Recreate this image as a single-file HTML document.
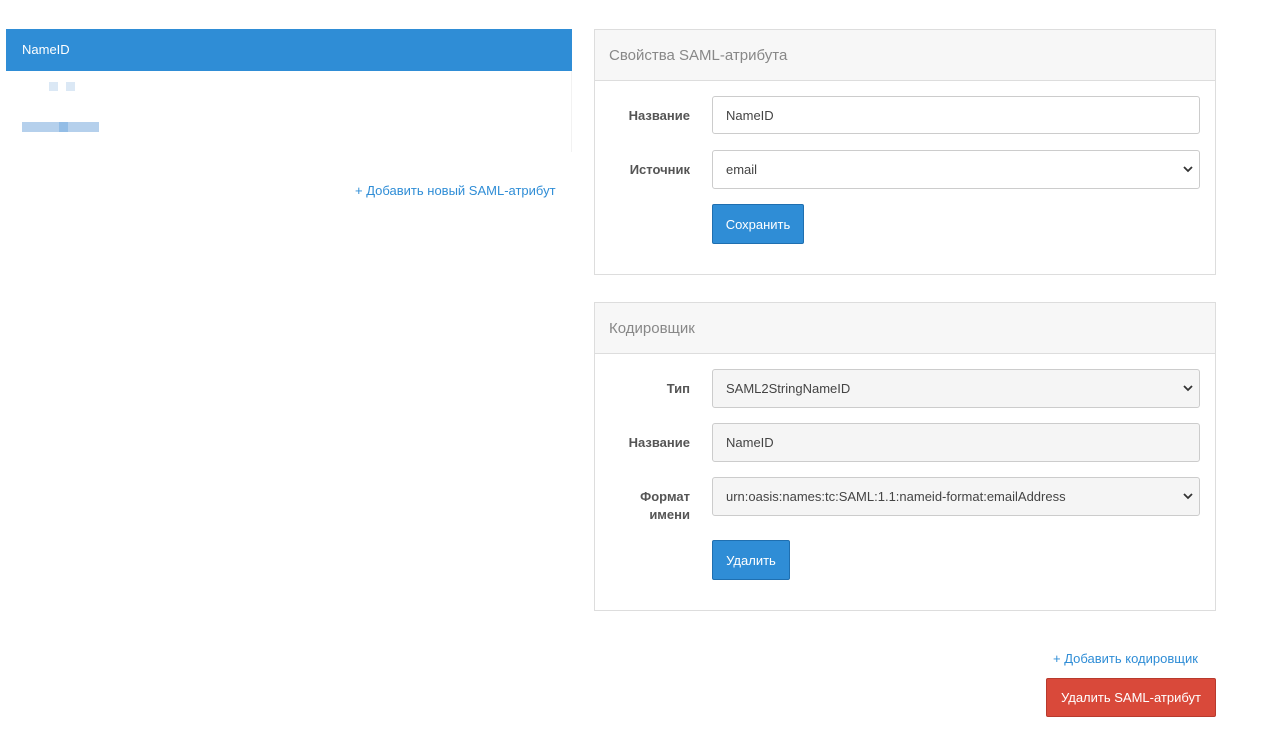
<!DOCTYPE html>
<html><head><meta charset="utf-8"><style>
*{box-sizing:border-box;margin:0;padding:0}
body{width:1274px;height:751px;background:#fff;font-family:"Liberation Sans",sans-serif;font-size:13px;color:#333;position:relative;overflow:hidden}
.a{position:absolute}
.panel{position:absolute;left:594px;width:622px;border:1px solid #ddd;background:#fff}
.ph{height:51px;background:#f7f7f7;border-bottom:1px solid #ddd;padding:17px 14px 0;font-size:15px;color:#888}
.lbl{position:absolute;width:96px;text-align:right;font-weight:bold;font-size:13px;color:#555;left:0}
.fld{position:absolute;left:712px;width:488px;height:39px;border:1px solid #ccc;border-radius:3px;padding:11px 0 0 13px;font-size:13px;color:#444;background:#fff}
.g{background:#f5f5f5}
.chev{position:absolute;right:6px;top:14px;width:10px;height:8px}
.btn{position:absolute;background:#2f8dd6;border:1px solid #1f6fb0;color:#fff;border-radius:2px;text-align:center;font-size:13px;padding-top:12px}
.link{position:absolute;color:#2f8dd6;font-size:13px}
</style></head><body>
<div class="a" style="left:6px;top:29px;width:566px;height:42px;background:#2f8dd6;color:#fff;padding:13px 0 0 16px;font-size:13px">NameID</div>
<div class="a" style="left:6px;top:71px;width:566px;height:81px;border-right:1px solid #f2f2f2;background:#fff"></div>
<div class="a" style="left:49px;top:82px;width:9px;height:9px;background:#dbe8f5"></div>
<div class="a" style="left:66px;top:82px;width:9px;height:9px;background:#dbe8f5"></div>
<div class="a" style="left:22px;top:122px;width:77px;height:10px;background:#b5d0ec"></div>
<div class="a" style="left:59px;top:122px;width:9px;height:10px;background:#93bde6"></div>
<div class="link" style="left:355px;top:183px">+ Добавить новый SAML-атрибут</div>

<div class="panel" style="top:29px;height:246px">
<div class="ph">Свойства SAML-атрибута</div>
</div>
<div class="lbl" style="left:594px;top:108px">Название</div>
<div class="fld" style="top:96px;height:38px">NameID</div>
<div class="lbl" style="left:594px;top:162px">Источник</div>
<div class="fld" style="top:150px">email<svg class="chev" viewBox="0 0 10 8"><path d="M1 2l4 4 4-4" stroke="#333" stroke-width="1.8" fill="none"/></svg></div>
<div class="btn" style="left:712px;top:204px;width:92px;height:40px">Сохранить</div>

<div class="panel" style="top:302px;height:309px">
<div class="ph">Кодировщик</div>
</div>
<div class="lbl" style="left:594px;top:381px">Тип</div>
<div class="fld g" style="top:369px">SAML2StringNameID<svg class="chev" viewBox="0 0 10 8"><path d="M1 2l4 4 4-4" stroke="#333" stroke-width="1.8" fill="none"/></svg></div>
<div class="lbl" style="left:594px;top:435px">Название</div>
<div class="fld g" style="top:423px">NameID</div>
<div class="lbl" style="left:594px;line-height:18px;top:488px">Формат<br>имени</div>
<div class="fld g" style="top:477px">urn:oasis:names:tc:SAML:1.1:nameid-format:emailAddress<svg class="chev" viewBox="0 0 10 8"><path d="M1 2l4 4 4-4" stroke="#333" stroke-width="1.8" fill="none"/></svg></div>
<div class="btn" style="left:712px;top:540px;width:78px;height:40px">Удалить</div>

<div class="link" style="left:1053px;top:651px">+ Добавить кодировщик</div>
<div class="btn" style="left:1046px;top:678px;width:170px;height:39px;background:#d9493a;border-color:#b83a2d;padding-top:11px">Удалить SAML-атрибут</div>
</body></html>
